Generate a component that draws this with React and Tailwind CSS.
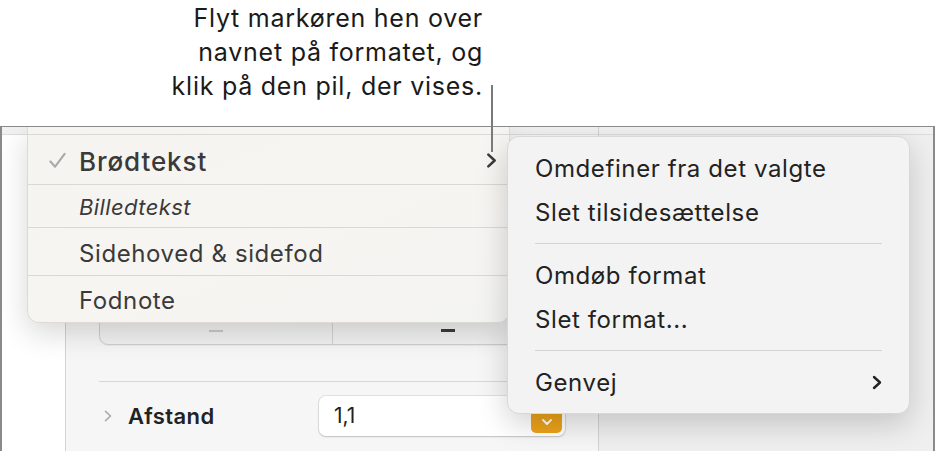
import React from "react";

const Chevron = ({ className = "", stroke = "#333", w = 2.2 }) => (
  <svg viewBox="0 0 12 16" className={className} fill="none">
    <path d="M3 2.5 L9 8 L3 13.5" stroke={stroke} strokeWidth={w} strokeLinecap="round" strokeLinejoin="round" />
  </svg>
);

export default function App() {
  return (
    <div
      className="relative w-[935px] h-[451px] overflow-hidden bg-white"
      style={{ fontFamily: "Inter, 'Liberation Sans', sans-serif" }}
    >
      {/* callout */}
      <div className="h-[126px] flex justify-end pr-[452px] pt-[1px]">
        <p className="text-right text-[25px] leading-[34px] text-[#1a1a1a] tracking-[0.75px] whitespace-nowrap">
          Flyt markøren hen over
          <br />
          navnet på formatet, og
          <br />
          klik på den pil, der vises.
        </p>
      </div>

      {/* frame */}
      <div className="relative h-[325px] border-t border-x-2 border-[#8a8a8a] overflow-hidden flex">
        {/* left column */}
        <div className="w-[63px] flex flex-col bg-white">
          <div className="h-[8px] bg-[#f1f1f1] border-b border-[#dcdcdc]" />
        </div>
        {/* panel */}
        <div className="w-[534px] flex flex-col bg-[#f6f6f6] border-x border-[#d2d2d2]">
          <div className="h-[8px] bg-[#f1f1f1] border-b border-[#dcdcdc]" />
          <div className="px-[33px] flex flex-col">
            <div className="mt-[150px] h-[60px] rounded-[9px] border border-[#cfcfcf] bg-[#f1f1f1] flex items-end shadow-[0_1px_1px_rgba(0,0,0,0.05)]">
              <div className="flex-1 h-full flex items-end justify-center pb-[12px] border-r border-[#d2d2d2]">
                <div className="w-[14px] h-[2px] bg-[#c8c8c8]" />
              </div>
              <div className="flex-1 h-full flex items-end justify-center pb-[12px]">
                <div className="w-[14px] h-[3px] bg-[#3a3a3a]" />
              </div>
            </div>
            <div className="mt-[36px] h-px bg-[#d6d6d6]" />
            <div className="mt-[14px] flex items-center h-[40px]">
              <Chevron className="w-[10px] h-[16px] ml-[4px]" stroke="#a8a8a8" w={1.8} />
              <span className="ml-[15px] text-[22px] font-semibold text-[#222] tracking-[0.4px]">Afstand</span>
              <div className="ml-auto w-[246px] h-[40px] bg-white rounded-[7px] shadow-[0_0_0_1px_rgba(0,0,0,0.08),0_1px_2px_rgba(0,0,0,0.15)] flex items-center pl-[15px] pr-[3px]">
                <span className="text-[21px] text-[#222]">1,1</span>
                <div className="ml-auto w-[31px] h-[28px] mt-[6px] rounded-[5px] bg-[#eba21a] flex items-center justify-center">
                  <svg viewBox="0 0 14 10" className="w-[12px] h-[8px] mt-[6px]" fill="none">
                    <path d="M2 2.5 L7 7.5 L12 2.5" stroke="white" strokeWidth="2.4" strokeLinecap="round" strokeLinejoin="round" />
                  </svg>
                </div>
              </div>
            </div>
          </div>
        </div>
        {/* right column */}
        <div className="flex-1 flex flex-col bg-[#efefef]">
          <div className="h-[8px] bg-[#f1f1f1] border-b border-[#dcdcdc]" />
        </div>

        {/* left style menu */}
        <div className="absolute left-[25px] top-0 w-[483px] h-[196px] rounded-b-[12px] bg-gradient-to-br from-[#f6f4f1] via-[#f7f5f1] to-[#f3f3f3] border-x border-b border-[#dedbd6] shadow-[0_10px_30px_rgba(0,0,0,0.16)] flex flex-col text-[#3a3a3a]">
          <div className="h-[8px] border-b border-[#dad8d4]" />
          <div className="h-[50px] flex items-center pt-[3px] border-b border-[#dad8d4] relative">
            <svg viewBox="0 0 20 20" className="absolute left-[20px] top-[16px] w-[19px] h-[19px]" fill="none">
              <path d="M2.5 11 L7.5 16.5 L17.5 3" stroke="#a9a9a9" strokeWidth="2.2" strokeLinecap="round" strokeLinejoin="round" />
            </svg>
            <span className="ml-[51px] text-[26px] font-medium tracking-[0.9px]">Brødtekst</span>
            <Chevron className="absolute left-[457px] top-[17px] w-[13px] h-[17px]" stroke="#3a3a3a" w={2.4} />
          </div>
          <div className="h-[43px] flex items-center pt-[3px] border-b border-[#dad8d4]">
            <span className="ml-[51px] text-[22px] italic tracking-[0.4px]">Billedtekst</span>
          </div>
          <div className="h-[48px] flex items-center pt-[4px] border-b border-[#dad8d4]">
            <span className="ml-[51px] text-[24px] tracking-[0.6px]">Sidehoved &amp; sidefod</span>
          </div>
          <div className="flex-1 flex items-center pt-[4px]">
            <span className="ml-[51px] text-[24px] tracking-[0.6px]">Fodnote</span>
          </div>
        </div>

        {/* right context menu */}
        <div className="absolute left-[505px] top-[9px] w-[403px] h-[278px] rounded-[12px] bg-[#f3f3f3] border border-[#d8d8d8] shadow-[0_10px_30px_rgba(0,0,0,0.18)] py-[9px] text-[24px] tracking-[0.6px] text-[#222]">
          <div className="h-[44px] flex items-center pt-[1px] pl-[27px]">Omdefiner fra det valgte</div>
          <div className="h-[44px] flex items-center pt-[1px] pl-[27px]">Slet tilsidesættelse</div>
          <div className="h-[19px] flex items-center px-[27px]">
            <div className="h-px w-full bg-[#d4d4d4]" />
          </div>
          <div className="h-[44px] flex items-center pt-[1px] pl-[27px]">Omdøb format</div>
          <div className="h-[44px] flex items-center pt-[1px] pl-[27px]">Slet format...</div>
          <div className="h-[19px] flex items-center px-[27px]">
            <div className="h-px w-full bg-[#d4d4d4]" />
          </div>
          <div className="h-[44px] flex items-center pt-[1px] pl-[27px] pr-[26px]">
            <span>Genvej</span>
            <Chevron className="ml-auto w-[12px] h-[17px]" stroke="#222" w={2.4} />
          </div>
        </div>
      </div>

      {/* leader line */}
      <div className="absolute left-[491px] top-[85px] w-[2px] h-[67px] bg-[#7a7a7a]" />
    </div>
  );
}
